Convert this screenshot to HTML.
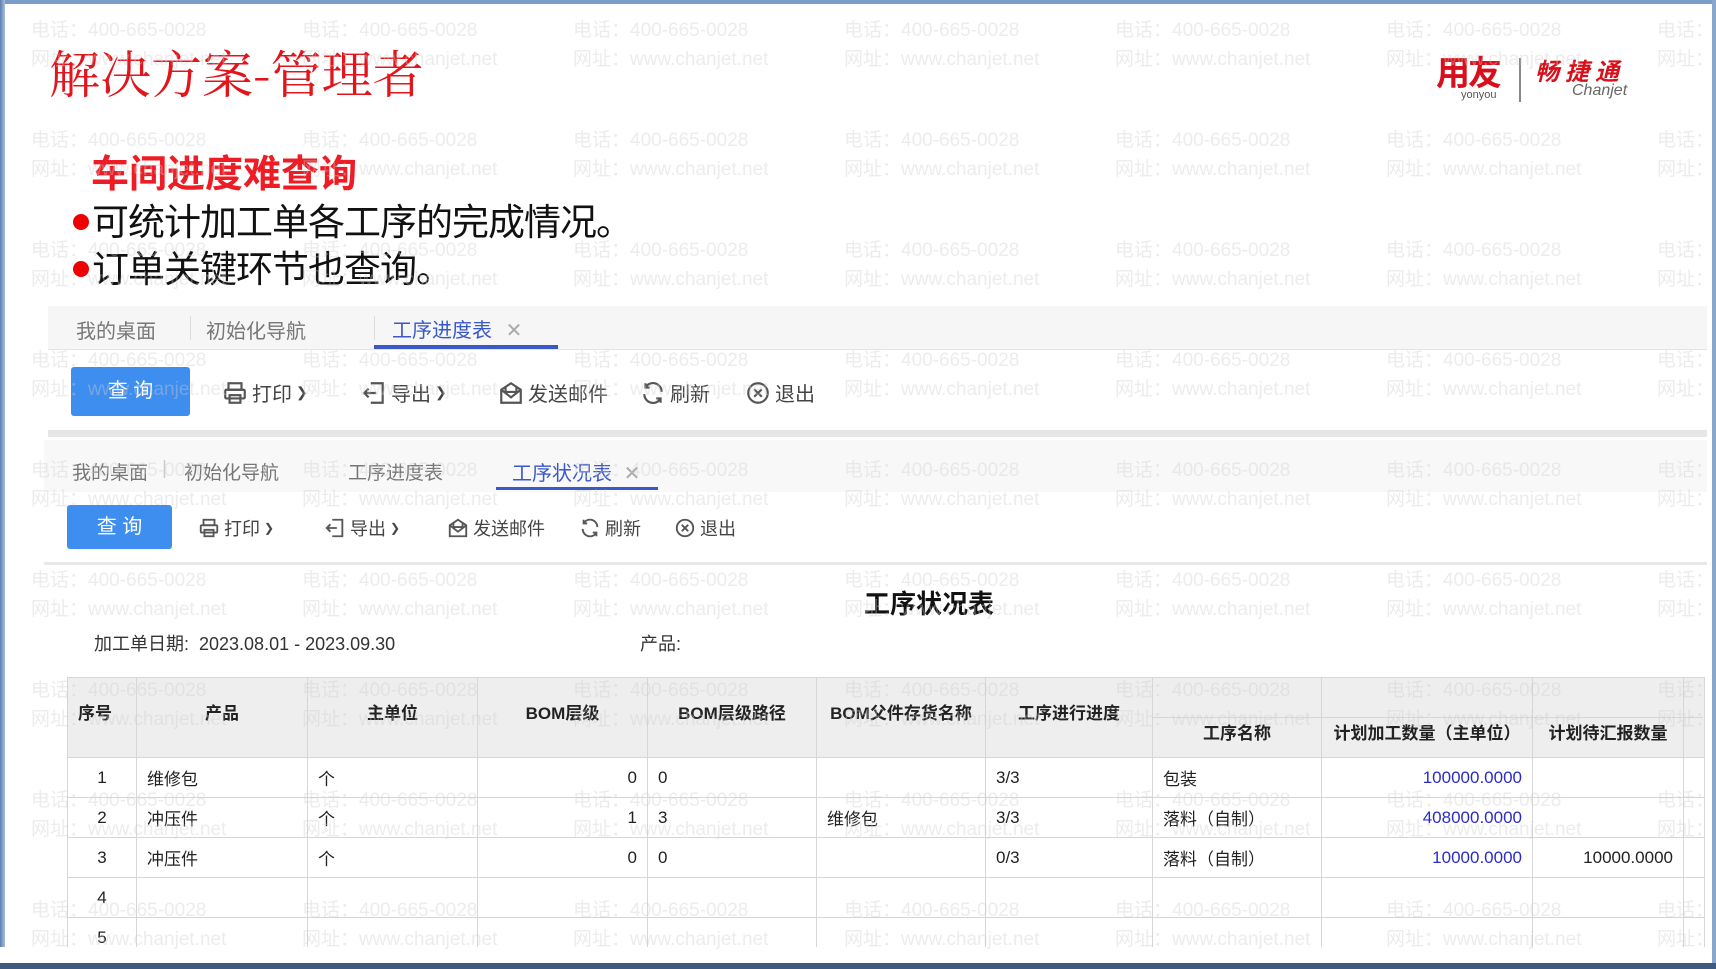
<!DOCTYPE html>
<html><head><meta charset="utf-8"><style>
*{margin:0;padding:0;box-sizing:border-box}
body{width:1716px;height:969px;overflow:hidden;background:#fff;font-family:"Liberation Sans","Noto Sans CJK SC",sans-serif;position:relative}
.a{position:absolute}
.wm{position:absolute;left:31px;white-space:nowrap;font-size:19px;color:rgba(205,205,205,.38);z-index:50;line-height:29px}
.wm i{display:inline-block;width:271px;font-style:normal}
.tab{position:absolute;font-size:20px;color:#777;white-space:nowrap}
.ti{position:absolute;display:flex;align-items:center;gap:4px;color:#444;white-space:nowrap}
.ti svg{fill:none;stroke:#555;stroke-width:2}
.btn{position:absolute;background:#3e8ef0;color:#fff;border-radius:3px;text-align:center;font-size:20px}
table{border-collapse:collapse;position:absolute;left:67px;top:677px;font-size:17px;color:#222}
td{border:1px solid #d6d6d6;height:40px;padding:0 10px;white-space:nowrap}
.n{text-align:right}.b{color:#2b2bc8}
.dot{display:inline-block;width:16px;height:16px;border-radius:50%;background:#e00;margin:0 3px 0 2px;vertical-align:middle;position:relative;top:-3px}
</style></head><body>
<div class="a" style="left:0;top:0;width:1716px;height:4px;background:#7a9cc8"></div>
<div class="a" style="left:0;top:0;width:5px;height:969px;background:linear-gradient(90deg,#5d7fb0,#a9c0df)"></div>
<div class="a" style="right:0;top:0;width:4px;height:969px;background:#8aa6cc"></div>
<div class="a" style="left:0;top:963px;width:1716px;height:6px;background:#3f5a7e"></div>

<div class="a" style="left:49px;top:34px;font-family:'Noto Serif CJK SC',serif;font-size:51px;color:#e2141c">解决方案-管理者</div>
<div class="a" style="left:1436px;top:46px;font-size:34px;font-weight:bold;color:#d8101b;letter-spacing:-2px">用友</div>
<div class="a" style="left:1461px;top:89px;font-size:11px;color:#555">yonyou</div>
<div class="a" style="left:1519px;top:58px;width:2px;height:44px;background:#888"></div>
<div class="a" style="left:1535px;top:52px;font-size:24px;font-weight:bold;font-style:italic;color:#d8101b;letter-spacing:6px">畅捷通</div>
<div class="a" style="left:1572px;top:82px;font-size:16px;font-style:italic;color:#666">Chanjet</div>

<div class="a" style="left:91px;top:143px;font-size:38px;font-weight:bold;color:#ee1c24">车间进度难查询</div>
<div class="a" style="left:71px;top:199px;font-size:37px;color:#111;line-height:47px;letter-spacing:-1px"><span class="dot"></span>可统计加工单各工序的完成情况。<br><span class="dot"></span>订单关键环节也查询。</div>

<!-- panel 1 -->
<div class="a" style="left:48px;top:306px;width:1659px;height:44px;background:#f6f6f6;border-bottom:1px solid #e4e4e4"></div>
<div class="tab" style="left:76px;top:315px">我的桌面</div>
<div class="a" style="left:190px;top:316px;width:1px;height:24px;background:#ddd"></div>
<div class="tab" style="left:206px;top:315px">初始化导航</div>
<div class="a" style="left:374px;top:316px;width:1px;height:24px;background:#ddd"></div>
<div class="tab" style="left:392px;top:314px;color:#3a58c8">工序进度表 <span style="color:#aaa;margin-left:8px">✕</span></div>
<div class="a" style="left:374px;top:345px;width:184px;height:4px;background:#3a58c8"></div>
<div class="btn" style="left:71px;top:367px;width:119px;height:49px;line-height:49px">查 询</div>
<div style="font-size:20px">
<div class="ti" style="left:222px;top:378px"><svg width="26" height="26" viewBox="0 0 24 24"><rect x="6" y="3" width="12" height="6"/><rect x="3" y="9" width="18" height="8" rx="1"/><rect x="7" y="14" width="10" height="7"/></svg>打印 <span style="font-size:14px">❯</span></div>
<div class="ti" style="left:361px;top:378px"><svg width="26" height="26" viewBox="0 0 24 24"><path d="M9 3h11v18H9M3 12h11M7 8l-4 4 4 4"/></svg>导出 <span style="font-size:14px">❯</span></div>
<div class="ti" style="left:498px;top:378px"><svg width="26" height="26" viewBox="0 0 24 24"><path d="M3 9l9-6 9 6v12H3zM3 9l9 7 9-7M7 6v5h10V6"/></svg>发送邮件</div>
<div class="ti" style="left:640px;top:378px"><svg width="26" height="26" viewBox="0 0 24 24"><path d="M20 11A8 8 0 0 0 5 7M4 13a8 8 0 0 0 15 4M5 3v4h4M19 21v-4h-4"/></svg>刷新</div>
<div class="ti" style="left:745px;top:378px"><svg width="26" height="26" viewBox="0 0 24 24"><circle cx="12" cy="12" r="9"/><path d="M8.5 8.5l7 7M15.5 8.5l-7 7"/></svg>退出</div>
</div>
<div class="a" style="left:48px;top:430px;width:1659px;height:7px;background:#e6e6e6"></div>

<!-- panel 2 -->
<div class="a" style="left:44px;top:440px;width:1663px;height:52px;background:#f8f8f8"></div>
<div class="tab" style="left:72px;top:458px;font-size:19px">我的桌面</div>
<div class="tab" style="left:162px;top:458px;font-size:19px;color:#ccc">|</div>
<div class="tab" style="left:184px;top:458px;font-size:19px">初始化导航</div>
<div class="tab" style="left:348px;top:458px;font-size:19px">工序进度表</div>
<div class="tab" style="left:512px;top:457px;color:#3a58c8">工序状况表 <span style="color:#aaa;margin-left:6px">✕</span></div>
<div class="a" style="left:496px;top:487px;width:162px;height:3px;background:#3a58c8"></div>
<div class="btn" style="left:67px;top:505px;width:105px;height:44px;line-height:44px">查 询</div>
<div style="font-size:18px">
<div class="ti" style="left:198px;top:515px"><svg width="22" height="22" viewBox="0 0 24 24"><rect x="6" y="3" width="12" height="6"/><rect x="3" y="9" width="18" height="8" rx="1"/><rect x="7" y="14" width="10" height="7"/></svg>打印<span style="font-size:12px">❯</span></div>
<div class="ti" style="left:324px;top:515px"><svg width="22" height="22" viewBox="0 0 24 24"><path d="M9 3h11v18H9M3 12h11M7 8l-4 4 4 4"/></svg>导出<span style="font-size:12px">❯</span></div>
<div class="ti" style="left:447px;top:515px"><svg width="22" height="22" viewBox="0 0 24 24"><path d="M3 9l9-6 9 6v12H3zM3 9l9 7 9-7M7 6v5h10V6"/></svg>发送邮件</div>
<div class="ti" style="left:579px;top:515px"><svg width="22" height="22" viewBox="0 0 24 24"><path d="M20 11A8 8 0 0 0 5 7M4 13a8 8 0 0 0 15 4M5 3v4h4M19 21v-4h-4"/></svg>刷新</div>
<div class="ti" style="left:674px;top:515px"><svg width="22" height="22" viewBox="0 0 24 24"><circle cx="12" cy="12" r="9"/><path d="M8.5 8.5l7 7M15.5 8.5l-7 7"/></svg>退出</div>
</div>
<div class="a" style="left:44px;top:562px;width:1663px;height:3px;background:#e8e8e8"></div>

<div class="a" style="left:864px;top:584px;font-size:26px;font-weight:bold;color:#111">工序状况表</div>
<div class="a" style="left:94px;top:630px;font-size:18px;color:#333">加工单日期:&nbsp;&nbsp;2023.08.01 - 2023.09.30</div>
<div class="a" style="left:640px;top:630px;font-size:18px;color:#333">产品:</div>

<div class="a" style="left:67px;top:677px;width:1636px;height:80px;background:#eee"></div>
<table>
<tr style="font-weight:bold;height:80px;background:#eee">
<td style="width:69px;height:80px;vertical-align:middle;padding-bottom:12px">序号</td>
<td style="width:171px;text-align:center;padding-bottom:12px">产品</td>
<td style="width:170px;text-align:center;padding-bottom:12px">主单位</td>
<td style="width:170px;text-align:center;padding-bottom:12px">BOM层级</td>
<td style="width:169px;text-align:center;padding-bottom:12px">BOM层级路径</td>
<td style="width:169px;text-align:center;padding:0 0 12px 0">BOM父件存货名称</td>
<td style="width:167px;text-align:center;padding-bottom:12px">工序进行进度</td>
<td style="width:169px;text-align:center;padding-top:28px">工序名称</td>
<td style="width:211px;text-align:center;padding:28px 0 0 0">计划加工数量（主单位）</td>
<td style="width:151px;text-align:center;padding:28px 0 0 0">计划待汇报数量</td>
<td style="width:20px"></td></tr>
<tr><td style="text-align:center">1</td><td>维修包</td><td>个</td><td class="n">0</td><td>0</td><td></td><td>3/3</td><td>包装</td><td class="n b">100000.0000</td><td></td><td></td></tr>
<tr><td style="text-align:center">2</td><td>冲压件</td><td>个</td><td class="n">1</td><td>3</td><td>维修包</td><td>3/3</td><td>落料（自制）</td><td class="n b">408000.0000</td><td></td><td></td></tr>
<tr><td style="text-align:center">3</td><td>冲压件</td><td>个</td><td class="n">0</td><td>0</td><td></td><td>0/3</td><td>落料（自制）</td><td class="n b">10000.0000</td><td class="n">10000.0000</td><td></td></tr>
<tr><td style="text-align:center">4</td><td></td><td></td><td></td><td></td><td></td><td></td><td></td><td></td><td></td><td></td></tr>
<tr><td style="text-align:center">5</td><td></td><td></td><td></td><td></td><td></td><td></td><td></td><td></td><td></td><td></td></tr>
</table>
<div class="a" style="left:1152px;top:717px;width:551px;height:1px;background:#d6d6d6"></div>
<div class="a" style="left:0;top:947px;width:1712px;height:16px;background:#fff"></div>

<div class="wm" style="top:16px"><i>电话：400-665-0028</i><i>电话：400-665-0028</i><i>电话：400-665-0028</i><i>电话：400-665-0028</i><i>电话：400-665-0028</i><i>电话：400-665-0028</i><i>电话：</i><br><i>网址：www.chanjet.net</i><i>网址：www.chanjet.net</i><i>网址：www.chanjet.net</i><i>网址：www.chanjet.net</i><i>网址：www.chanjet.net</i><i>网址：www.chanjet.net</i><i>网址：</i></div>
<div class="wm" style="top:126px"><i>电话：400-665-0028</i><i>电话：400-665-0028</i><i>电话：400-665-0028</i><i>电话：400-665-0028</i><i>电话：400-665-0028</i><i>电话：400-665-0028</i><i>电话：</i><br><i>网址：www.chanjet.net</i><i>网址：www.chanjet.net</i><i>网址：www.chanjet.net</i><i>网址：www.chanjet.net</i><i>网址：www.chanjet.net</i><i>网址：www.chanjet.net</i><i>网址：</i></div>
<div class="wm" style="top:236px"><i>电话：400-665-0028</i><i>电话：400-665-0028</i><i>电话：400-665-0028</i><i>电话：400-665-0028</i><i>电话：400-665-0028</i><i>电话：400-665-0028</i><i>电话：</i><br><i>网址：www.chanjet.net</i><i>网址：www.chanjet.net</i><i>网址：www.chanjet.net</i><i>网址：www.chanjet.net</i><i>网址：www.chanjet.net</i><i>网址：www.chanjet.net</i><i>网址：</i></div>
<div class="wm" style="top:346px"><i>电话：400-665-0028</i><i>电话：400-665-0028</i><i>电话：400-665-0028</i><i>电话：400-665-0028</i><i>电话：400-665-0028</i><i>电话：400-665-0028</i><i>电话：</i><br><i>网址：www.chanjet.net</i><i>网址：www.chanjet.net</i><i>网址：www.chanjet.net</i><i>网址：www.chanjet.net</i><i>网址：www.chanjet.net</i><i>网址：www.chanjet.net</i><i>网址：</i></div>
<div class="wm" style="top:456px"><i>电话：400-665-0028</i><i>电话：400-665-0028</i><i>电话：400-665-0028</i><i>电话：400-665-0028</i><i>电话：400-665-0028</i><i>电话：400-665-0028</i><i>电话：</i><br><i>网址：www.chanjet.net</i><i>网址：www.chanjet.net</i><i>网址：www.chanjet.net</i><i>网址：www.chanjet.net</i><i>网址：www.chanjet.net</i><i>网址：www.chanjet.net</i><i>网址：</i></div>
<div class="wm" style="top:566px"><i>电话：400-665-0028</i><i>电话：400-665-0028</i><i>电话：400-665-0028</i><i>电话：400-665-0028</i><i>电话：400-665-0028</i><i>电话：400-665-0028</i><i>电话：</i><br><i>网址：www.chanjet.net</i><i>网址：www.chanjet.net</i><i>网址：www.chanjet.net</i><i>网址：www.chanjet.net</i><i>网址：www.chanjet.net</i><i>网址：www.chanjet.net</i><i>网址：</i></div>
<div class="wm" style="top:676px"><i>电话：400-665-0028</i><i>电话：400-665-0028</i><i>电话：400-665-0028</i><i>电话：400-665-0028</i><i>电话：400-665-0028</i><i>电话：400-665-0028</i><i>电话：</i><br><i>网址：www.chanjet.net</i><i>网址：www.chanjet.net</i><i>网址：www.chanjet.net</i><i>网址：www.chanjet.net</i><i>网址：www.chanjet.net</i><i>网址：www.chanjet.net</i><i>网址：</i></div>
<div class="wm" style="top:786px"><i>电话：400-665-0028</i><i>电话：400-665-0028</i><i>电话：400-665-0028</i><i>电话：400-665-0028</i><i>电话：400-665-0028</i><i>电话：400-665-0028</i><i>电话：</i><br><i>网址：www.chanjet.net</i><i>网址：www.chanjet.net</i><i>网址：www.chanjet.net</i><i>网址：www.chanjet.net</i><i>网址：www.chanjet.net</i><i>网址：www.chanjet.net</i><i>网址：</i></div>
<div class="wm" style="top:896px"><i>电话：400-665-0028</i><i>电话：400-665-0028</i><i>电话：400-665-0028</i><i>电话：400-665-0028</i><i>电话：400-665-0028</i><i>电话：400-665-0028</i><i>电话：</i><br><i>网址：www.chanjet.net</i><i>网址：www.chanjet.net</i><i>网址：www.chanjet.net</i><i>网址：www.chanjet.net</i><i>网址：www.chanjet.net</i><i>网址：www.chanjet.net</i><i>网址：</i></div>
</body></html>
